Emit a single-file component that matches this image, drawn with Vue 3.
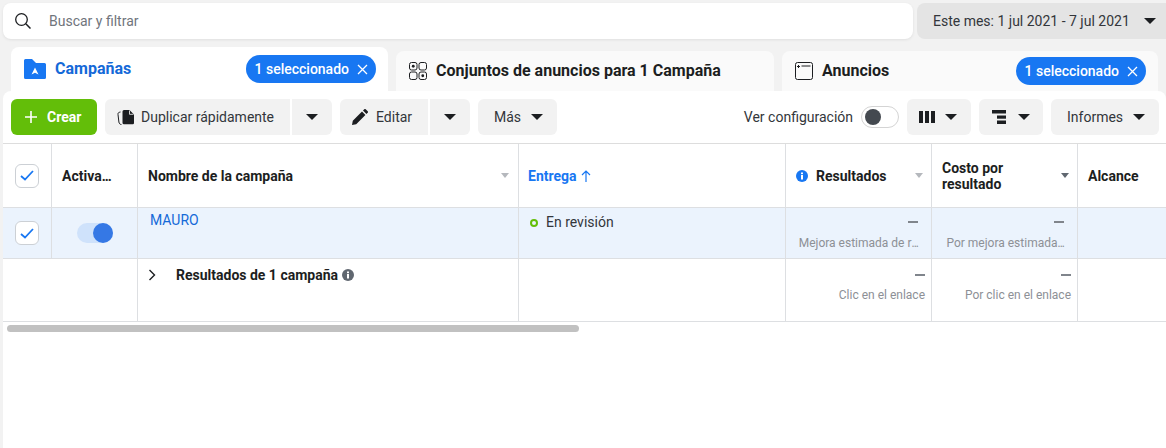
<script setup>
</script>

<template>
  <div class="page">
    <div class="topbar">
      <div class="search">
        <svg class="search-ic" width="16" height="16" viewBox="0 0 16 16"><circle cx="6.500" cy="6.500" r="5.800" fill="none" stroke="#1c1e21" stroke-width="1.300"/><path d="M10.800 10.800l4.700 4.700" stroke="#1c1e21" stroke-width="1.500" fill="none"/></svg>
        <span class="search-text">Buscar y filtrar</span>
      </div>
      <div class="date">
        <span>Este mes: 1 jul 2021 - 7 jul 2021</span>
        <i class="caret"></i>
      </div>
    </div>

    <div class="tabs">
      <div class="tab tab-active">
        <svg width="22" height="20" viewBox="0 0 22 20"><path d="M0 1.500A1.500 1.500 0 0 1 1.500 0H8l4 4h8.500A1.500 1.500 0 0 1 22 5.500v13a1.500 1.500 0 0 1-1.500 1.500h-19A1.500 1.500 0 0 1 0 18.500z" fill="#1877f2"/><path d="M7.500 15.500L11 8.500l3.500 7-3.500-1.800z" fill="#fff"/></svg>
        <span class="tab-title blue">Campañas</span>
        <span class="pill">1 seleccionado <svg width="11" height="11" viewBox="0 0 11 11"><path d="M1 1l9 9M10 1l-9 9" stroke="#fff" stroke-width="1.300"/></svg></span>
      </div>
      <div class="tab tab-two">
        <svg width="18" height="18" viewBox="0 0 18 18" fill="none" stroke="#1c1e21" stroke-width="1"><rect x=".5" y=".5" width="7.500" height="7.500" rx="2"/><rect x="10" y=".5" width="7.500" height="7.500" rx="2"/><rect x=".5" y="10" width="7.500" height="7.500" rx="2"/><rect x="10" y="10" width="7.500" height="7.500" rx="2"/><circle cx="4.250" cy="4.250" r="1.400" fill="#1c1e21" stroke="none"/><circle cx="13.750" cy="13.750" r="1.400" fill="#1c1e21" stroke="none"/></svg>
        <span class="tab-title">Conjuntos de anuncios para 1 Campaña</span>
      </div>
      <div class="tab tab-three">
        <svg width="18" height="18" viewBox="0 0 18 18" fill="none" stroke="#1c1e21" stroke-width="1"><rect x=".5" y=".5" width="17" height="17" rx="2"/><path d="M2 4.500h3M3.500 3v3M6.500 4h9"/></svg>
        <span class="tab-title">Anuncios</span>
        <span class="pill">1 seleccionado <svg width="11" height="11" viewBox="0 0 11 11"><path d="M1 1l9 9M10 1l-9 9" stroke="#fff" stroke-width="1.300"/></svg></span>
      </div>
    </div>

    <div class="panel">
      <div class="toolbar">
        <button class="btn create"><svg width="12" height="12" viewBox="0 0 12 12"><path d="M6 0v12M0 6h12" stroke="#fff" stroke-width="1.600"/></svg><span>Crear</span></button>
        <button class="btn dup">
          <svg width="17" height="15" viewBox="0 0 17 15"><path d="M7 0h5.500L17 4.500V13a1.200 1.200 0 0 1-1.200 1.200H7A1.500 1.500 0 0 1 5.500 12.700V1.500A1.500 1.500 0 0 1 7 0z" fill="#1c1e21"/><path d="M12.500 .5v3.800h4" fill="none" stroke="#fff" stroke-width=".8"/><path d="M3.500 2C1.500 2.300.8 3 1 4.500l.9 7.500c.2 1.500 1 2.300 2.600 2.700" fill="none" stroke="#1c1e21" stroke-width="1"/></svg>
          <span>Duplicar rápidamente</span>
        </button>
        <button class="btn caret-btn"><i class="caret"></i></button>
        <button class="btn edit">
          <svg width="16" height="16" viewBox="0 0 16 16"><path d="M0 16l.8-4.200L10 2.600 13.400 6l-9.200 9.200zM11 1.600L12.300.300a1 1 0 0 1 1.400 0l2 2a1 1 0 0 1 0 1.400L14.400 5z" fill="#1c1e21"/></svg>
          <span>Editar</span>
        </button>
        <button class="btn caret-btn"><i class="caret"></i></button>
        <button class="btn mas"><span>Más</span><i class="caret"></i></button>
        <div class="spacer"></div>
        <span class="ver">Ver configuración</span>
        <div class="switch"><i></i></div>
        <button class="btn icon-btn cols">
          <svg width="16" height="12" viewBox="0 0 16 12" fill="#1c1e21"><rect width="4" height="12"/><rect x="6" width="4" height="12"/><rect x="12" width="4" height="12"/></svg>
          <i class="caret"></i>
        </button>
        <button class="btn icon-btn tree">
          <svg width="14" height="14" viewBox="0 0 14 14" fill="#1c1e21"><rect width="14" height="3.500"/><rect x="5" y="5.500" width="9" height="3.200"/><rect x="5" y="10.500" width="9" height="3.500"/></svg>
          <i class="caret"></i>
        </button>
        <button class="btn informes"><span>Informes</span><i class="caret"></i></button>
      </div>

      <div class="table">
        <div class="row head">
          <div class="cell c1"><span class="check"><svg width="14" height="11" viewBox="0 0 14 11"><path d="M1 6l4 3.500L13 1" fill="none" stroke="#1877f2" stroke-width="1.800"/></svg></span></div>
          <div class="cell c2 th"><span>Activa<span class="dots">...</span></span></div>
          <div class="cell c3 th between"><span>Nombre de la campaña</span><i class="caret small light"></i></div>
          <div class="cell c4 th"><span class="blue">Entrega</span><svg class="up" width="10" height="12" viewBox="0 0 10 12"><path d="M5 12V1M1 5l4-4 4 4" fill="none" stroke="#1877f2" stroke-width="1.200"/></svg></div>
          <div class="cell c5 th">
            <svg class="info" width="12" height="12" viewBox="0 0 12 12"><circle cx="6" cy="6" r="6" fill="#1877f2"/><rect x="5" y="5" width="2" height="4.500" fill="#fff"/><rect x="5" y="2.500" width="2" height="1.700" fill="#fff"/></svg>
            <span>Resultados</span>
            <i class="caret small light push"></i>
          </div>
          <div class="cell c6 th between"><span class="two">Costo por<br>resultado</span><i class="caret small dark"></i></div>
          <div class="cell c7 th"><span>Alcance</span></div>
        </div>

        <div class="row selected">
          <div class="cell c1"><span class="check"><svg width="14" height="11" viewBox="0 0 14 11"><path d="M1 6l4 3.500L13 1" fill="none" stroke="#1877f2" stroke-width="1.800"/></svg></span></div>
          <div class="cell c2 center"><span class="on"><i></i></span></div>
          <div class="cell c3 name"><span>MAURO</span></div>
          <div class="cell c4 state"><i class="dot"></i><span>En revisión</span></div>
          <div class="cell c5 metric sel"><i class="dash"></i><span class="sub">Mejora estimada de r<span class="dots">...</span></span></div>
          <div class="cell c6 metric sel"><i class="dash"></i><span class="sub">Por mejora estimada<span class="dots">...</span></span></div>
          <div class="cell c7"></div>
        </div>

        <div class="row total">
          <div class="cell"></div>
          <div class="cell c3 sum">
            <svg width="8" height="12" viewBox="0 0 8 12"><path d="M1.500 1l5 5-5 5" fill="none" stroke="#1c1e21" stroke-width="1.400"/></svg>
            <span class="sum-text">Resultados de 1 campaña</span>
            <svg width="12" height="12" viewBox="0 0 12 12"><circle cx="6" cy="6" r="6" fill="#606770"/><rect x="5" y="5" width="2" height="4.500" fill="#fff"/><rect x="5" y="2.500" width="2" height="1.700" fill="#fff"/></svg>
          </div>
          <div class="cell c4"></div>
          <div class="cell c5 metric"><i class="dash"></i><span class="sub">Clic en el enlace</span></div>
          <div class="cell c6 metric"><i class="dash"></i><span class="sub">Por clic en el enlace</span></div>
          <div class="cell c7"></div>
        </div>
      </div>
      <div class="scroll"><i></i></div>
    </div>
  </div>
</template>

<style>
html, body { margin: 0; background: #f2f2f2; }
</style>

<style scoped>
.page { width: 1166px; height: 448px; overflow: hidden; background: #f2f2f2; font-family: Roboto, "Liberation Sans", sans-serif; color: #1c1e21; font-size: 14px; padding-top: 3px; box-sizing: border-box; }
.topbar { display: flex; gap: 4px; padding-left: 3px; height: 36px; }
.search { width: 910px; background: #fff; border-radius: 8px; display: flex; align-items: center; box-shadow: 0 1px 3px rgba(0,0,0,.08); }
.search-ic { margin-left: 12px; }
.search-text { margin-left: 18px; color: #70757c; }
.date { flex: 1; background: #e4e4e4; border-radius: 8px 0 0 8px; display: flex; align-items: center; padding: 0 10px 0 16px; justify-content: space-between; color: #33363b; }
.caret { display: inline-block; flex: none; width: 0; height: 0; border-left: 6px solid transparent; border-right: 6px solid transparent; border-top: 6px solid #1c1e21; }
.caret.small { border-left-width: 4.500px; border-right-width: 4.500px; border-top-width: 5px; }
.caret.light { border-top-color: #b5b8bd; }
.caret.dark { border-top-color: #606770; }
.tabs { display: flex; align-items: flex-end; gap: 8px; padding-left: 11px; margin-top: 8px; height: 44px; }
.tab { box-sizing: border-box; height: 40px; border-radius: 8px 8px 0 0; background: #fafafa; display: flex; align-items: center; padding: 0 13px; }
.tab-active { width: 377px; height: 44px; background: #fff; padding: 0 12px 0 13px; }
.tab-two { width: 378px; }
.tab-three { width: 376px; padding: 0 12px 0 13px; }
.tab-title { font-size: 16px; font-weight: 700; margin: -2px 0 0 9px; flex: 1; white-space: nowrap; }
.blue { color: #1877f2; }
.tab-title.blue { color: #1469d8; }
.pill { background: #1877f2; color: #fff; height: 28px; border-radius: 14px; padding: 0 8px; display: inline-flex; align-items: center; gap: 8px; font-weight: 500; white-space: nowrap; }
.panel { background: #fff; margin-left: 3px; border-radius: 8px 8px 0 0; height: 357px; }
.toolbar { display: flex; align-items: center; height: 36px; padding: 8px 7px 0 8px; }
.btn { height: 36px; box-sizing: border-box; border: 0; background: #f2f2f2; border-radius: 6px; font: inherit; color: #33363b; display: inline-flex; align-items: center; padding: 0; flex: none; }
.create { width: 86px; background: #63be09; color: #fff; font-weight: 700; padding-left: 14px; gap: 10px; }
.dup { width: 185px; margin-left: 8px; padding-left: 12px; gap: 7px; border-radius: 6px 0 0 6px; }
.caret-btn { width: 40px; justify-content: center; margin-left: 2px; border-radius: 0 6px 6px 0; }
.edit { width: 88px; margin-left: 8px; padding-left: 12px; gap: 8px; border-radius: 6px 0 0 6px; }
.mas { width: 79px; margin-left: 8px; padding-left: 16px; gap: 10px; }
.spacer { flex: 1; }
.ver { color: #33363b; white-space: nowrap; }
.switch { width: 36px; height: 20px; border: 1px solid #d4d4d4; border-radius: 12px; margin: 0 8px; position: relative; background: #fff; }
.switch i { position: absolute; left: 3px; top: 2px; width: 16px; height: 16px; border-radius: 50%; background: #444950; }
.icon-btn { width: 64px; justify-content: center; margin-right: 8px; }
.cols { gap: 10px; padding-right: 2px; }
.tree { gap: 12px; padding-right: 1px; }
.informes { width: 108px; padding-left: 16px; gap: 10px; }
.table { margin-top: 8px; border-top: 1px solid #ddd; }
.row { display: grid; grid-template-columns: 49px 86px 381px 267px 146px 146px 1fr; box-sizing: border-box; border-bottom: 1px solid #dddfe2; }
.head { height: 64px; }
.selected { height: 51px; background: #ebf3fd; }
.total { height: 63px; grid-template-columns: 135px 381px 267px 146px 146px 1fr; }
.cell { box-sizing: border-box; border-right: 1px solid #dddfe2; min-width: 0; }
.c7 { border-right: 0; }
.c1, .center { display: flex; align-items: center; justify-content: center; }
.check { width: 24px; height: 24px; box-sizing: border-box; border: 1px solid #ccd0d5; border-radius: 6px; background: #fff; display: flex; align-items: center; justify-content: center; }
.th { display: flex; align-items: center; font-weight: 700; font-size: 14px; padding: 0 10px; white-space: nowrap; }
.dots { letter-spacing: -1px; }
.between { justify-content: space-between; }
.c3.th { padding-right: 9px; }
.c6.th { padding: 0 8px 0 10px; }
.c4.th { padding-left: 9px; }
.c5.th { padding: 0 8px 0 10px; }
.two { line-height: 16px; }
.up { margin-left: 4px; }
.info { margin-right: 8px; }
.push { margin-left: auto; }
.on { width: 36px; height: 20px; border-radius: 10px; background: #cfe2fb; position: relative; display: block; }
.on i { position: absolute; right: 0; top: 0; width: 20px; height: 20px; border-radius: 50%; background: #3578e5; }
.name { padding: 4px 12px; color: #1469d8; font-size: 14px; }
.state { display: flex; align-items: flex-start; padding: 6px 11px; gap: 8px; color: #33363b; }
.dot { width: 8px; height: 8px; box-sizing: border-box; border: 2px solid #63be09; border-radius: 50%; margin-top: 5px; }
.metric { display: flex; flex-direction: column; align-items: flex-end; padding: 15px 6px 0 0; white-space: nowrap; }
.metric.sel { padding: 13px 13px 0 0; }
.dash { width: 10px; height: 1.500px; background: #80858c; display: block; }
.sub { font-size: 12px; color: #8d9096; margin-top: 12px; line-height: 14px; }
.sel .sub { margin-top: 13px; }
.sum { display: flex; align-items: flex-start; padding: 9px 10px; }
.sum svg { margin-top: 1px; }
.sum-text { font-weight: 700; font-size: 14px; margin: -1px 4px 0 20px; line-height: 16px; }
.scroll { padding: 3px 4px; }
.scroll i { display: block; width: 572px; height: 7px; border-radius: 4px; background: #c1c1c1; }
</style>
